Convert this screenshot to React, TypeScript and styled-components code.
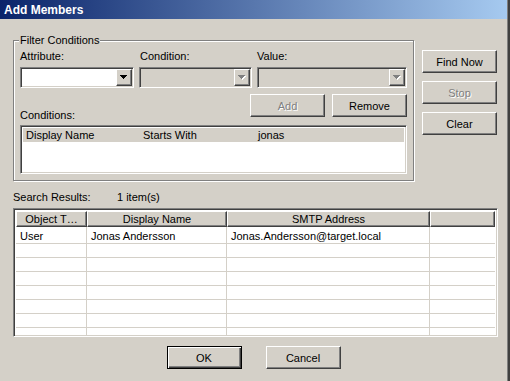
import React from 'react';
import styled, { createGlobalStyle, css } from 'styled-components';

const GlobalStyle = createGlobalStyle`
  html, body {
    margin: 0;
    padding: 0;
    background: #d4d0c8;
  }
  body {
    font-family: "Liberation Sans", Arial, sans-serif;
    font-size: 11px;
    color: #000;
  }
`;

// classic 3d edges
const raised = css`
  border: 1px solid;
  border-color: #fff #404040 #404040 #fff;
  box-shadow: inset -1px -1px #808080;
`;

const sunken = css`
  border: 1px solid;
  border-color: #808080 #fff #fff #808080;
  box-shadow: inset 1px 1px #404040, inset -1px -1px #d4d0c8;
`;

const Window = styled.div`
  width: 510px;
  height: 381px;
  box-sizing: border-box;
  background: #d4d0c8;
  border-right: 2px solid #404040;
  box-shadow: inset -1px 0 #808080;
  display: flex;
  flex-direction: column;
  overflow: hidden;
`;

const TitleBar = styled.div`
  height: 19px;
  margin-right: 1px;
  padding-left: 4px;
  display: flex;
  align-items: center;
  background: linear-gradient(to right, #0a246a, #a6caf0);
  color: #fff;
  font-weight: bold;
  font-size: 12px;
`;

const Body = styled.div`
  padding: 15px 10px 0 13px;
  display: flex;
  flex-direction: column;
`;

const TopRow = styled.div`
  display: flex;
  align-items: flex-start;
`;

const Group = styled.fieldset`
  flex-shrink: 0;
  margin: 0;
  min-width: 0;
  width: 401px;
  box-sizing: border-box;
  padding: 3px 6px 6px 6px;
  border: 1px solid #808080;
  box-shadow: inset 1px 1px #fff, 1px 1px #fff;
`;

const Caption = styled.legend`
  padding: 0 1px;
  margin-left: -1px;
  line-height: 13px;
  background: #d4d0c8;
`;

const FieldGrid = styled.div`
  display: grid;
  grid-template-columns: 114px 113px 150px;
  column-gap: 5px;
  row-gap: 4px;
`;

const Label = styled.div<{ $indent?: number }>`
  line-height: 13px;
  white-space: nowrap;
  padding-left: ${(p) => p.$indent ?? 0}px;
`;

const Combo = styled.div<{ $disabled?: boolean }>`
  ${sunken};
  height: 21px;
  box-sizing: border-box;
  padding: 1px;
  display: flex;
  justify-content: flex-end;
  background: ${(p) => (p.$disabled ? '#d4d0c8' : '#fff')};
`;

const DropButton = styled.div`
  ${raised};
  width: 16px;
  height: 17px;
  box-sizing: border-box;
  background: #d4d0c8;
  display: flex;
  align-items: center;
  justify-content: center;
`;

const ActionRow = styled.div`
  margin-top: 6px;
  display: flex;
  justify-content: space-between;
  align-items: flex-end;
`;

const ConditionsLabel = styled(Label)`
  align-self: flex-end;
  margin-bottom: -5px;
`;

const ButtonGroup = styled.div<{ $gap: number }>`
  display: flex;
  gap: ${(p) => p.$gap}px;
`;

const Button = styled.button<{ $default?: boolean }>`
  flex-shrink: 0;
  width: 75px;
  height: 23px;
  margin: 0;
  padding: 0;
  box-sizing: border-box;
  background: #d4d0c8;
  font-family: "Liberation Sans", Arial, sans-serif;
  font-size: 11px;
  color: #000;
  outline: none;
  ${(p) =>
    p.$default
      ? css`
          border: 1px solid #000;
          box-shadow: inset 1px 1px #fff, inset -1px -1px #404040,
            inset -2px -2px #808080;
        `
      : raised};
  &:disabled {
    color: #808080;
    text-shadow: 1px 1px #fff;
  }
`;

const CondList = styled.div`
  ${sunken};
  margin-top: 8px;
  height: 49px;
  box-sizing: border-box;
  padding: 2px 2px 0 2px;
  background: #fff;
`;

const CondRow = styled.div<{ $selected?: boolean }>`
  display: grid;
  grid-template-columns: 117px 115px 1fr;
  height: 14px;
  line-height: 14px;
  background: ${(p) => (p.$selected ? '#d4d0c8' : 'transparent')};
  & > span {
    padding-left: 3px;
    white-space: nowrap;
  }
`;

const SideButtons = styled.div`
  margin-left: 8px;
  padding-top: 16px;
  display: flex;
  flex-direction: column;
  gap: 8px;
`;

const ResultsInfo = styled.div`
  margin-top: 10px;
  display: flex;
  line-height: 13px;
`;

const ResultsTitle = styled.div`
  width: 104px;
`;

const ResultsList = styled.div`
  ${sunken};
  margin-top: 4px;
  width: 485px;
  height: 129px;
  box-sizing: border-box;
  padding: 2px;
  background: #fff;
  overflow: hidden;
`;

const cols = '71px 140px 203px 1fr';

const HeaderRow = styled.div`
  display: grid;
  grid-template-columns: ${cols};
  height: 16px;
  background: #d4d0c8;
`;

const HeadCell = styled.div`
  ${raised};
  box-sizing: border-box;
  line-height: 14px;
  padding: 0 4px;
  text-align: center;
  white-space: nowrap;
  overflow: hidden;
  text-overflow: ellipsis;
`;

const GridRow = styled.div<{ $h: number; $line?: boolean }>`
  display: grid;
  grid-template-columns: ${cols};
  height: ${(p) => p.$h}px;
  box-sizing: border-box;
  border-bottom: ${(p) => (p.$line ? '1px solid #d4d0c8' : 'none')};
  line-height: 13px;
`;

const GridCell = styled.div`
  padding-left: 4px;
  white-space: nowrap;
  overflow: hidden;
  border-right: 1px solid #d4d0c8;
  &:last-child {
    border-right: none;
  }
`;

const Footer = styled.div`
  margin-top: 9px;
  margin-right: 4px;
  display: flex;
  justify-content: center;
  gap: 24px;
`;

function Arrow({ disabled }: { disabled?: boolean }) {
  const d = 'M0 0h7v1h-1v1h-1v1h-1v1h-1v-1h-1v-1h-1v-1h-1z';
  return (
    <svg width='8' height='5' viewBox='0 0 8 5' style={{ display: 'block' }}>
      {disabled && <path d={d} fill='#fff' transform='translate(1 1)' />}
      <path d={d} fill={disabled ? '#808080' : '#000'} />
    </svg>
  );
}

function ComboBox({ disabled }: { disabled?: boolean }) {
  return (
    <Combo $disabled={disabled}>
      <DropButton>
        <Arrow disabled={disabled} />
      </DropButton>
    </Combo>
  );
}

const results = [
  ['User', 'Jonas Andersson', 'Jonas.Andersson@target.local', ''],
];

export default function App() {
  const emptyRows = Array.from({ length: 7 }, () => ['', '', '', '']);
  const rows = [...results, ...emptyRows];

  return (
    <>
      <GlobalStyle />
      <Window>
        <TitleBar>Add Members</TitleBar>
        <Body>
          <TopRow>
            <Group>
              <Caption>Filter Conditions</Caption>
              <FieldGrid>
                <Label>Attribute:</Label>
                <Label $indent={1}>Condition:</Label>
                <Label>Value:</Label>
                <ComboBox />
                <ComboBox disabled />
                <ComboBox disabled />
              </FieldGrid>
              <ActionRow>
                <ConditionsLabel>Conditions:</ConditionsLabel>
                <ButtonGroup $gap={7}>
                  <Button disabled>Add</Button>
                  <Button>Remove</Button>
                </ButtonGroup>
              </ActionRow>
              <CondList>
                <CondRow $selected>
                  <span>Display Name</span>
                  <span>Starts With</span>
                  <span>jonas</span>
                </CondRow>
              </CondList>
            </Group>
            <SideButtons>
              <Button>Find Now</Button>
              <Button disabled>Stop</Button>
              <Button>Clear</Button>
            </SideButtons>
          </TopRow>

          <ResultsInfo>
            <ResultsTitle>Search Results:</ResultsTitle>
            <div>1 item(s)</div>
          </ResultsInfo>

          <ResultsList>
            <HeaderRow>
              <HeadCell>Object T…</HeadCell>
              <HeadCell>Display Name</HeadCell>
              <HeadCell>SMTP Address</HeadCell>
              <HeadCell />
            </HeaderRow>
            <GridRow $h={3}>
              <GridCell />
              <GridCell />
              <GridCell />
              <GridCell />
            </GridRow>
            {rows.map((r, i) => (
              <GridRow key={i} $h={14} $line>
                {r.map((c, j) => (
                  <GridCell key={j}>{c}</GridCell>
                ))}
              </GridRow>
            ))}
          </ResultsList>

          <Footer>
            <Button $default>OK</Button>
            <Button>Cancel</Button>
          </Footer>
        </Body>
      </Window>
    </>
  );
}
